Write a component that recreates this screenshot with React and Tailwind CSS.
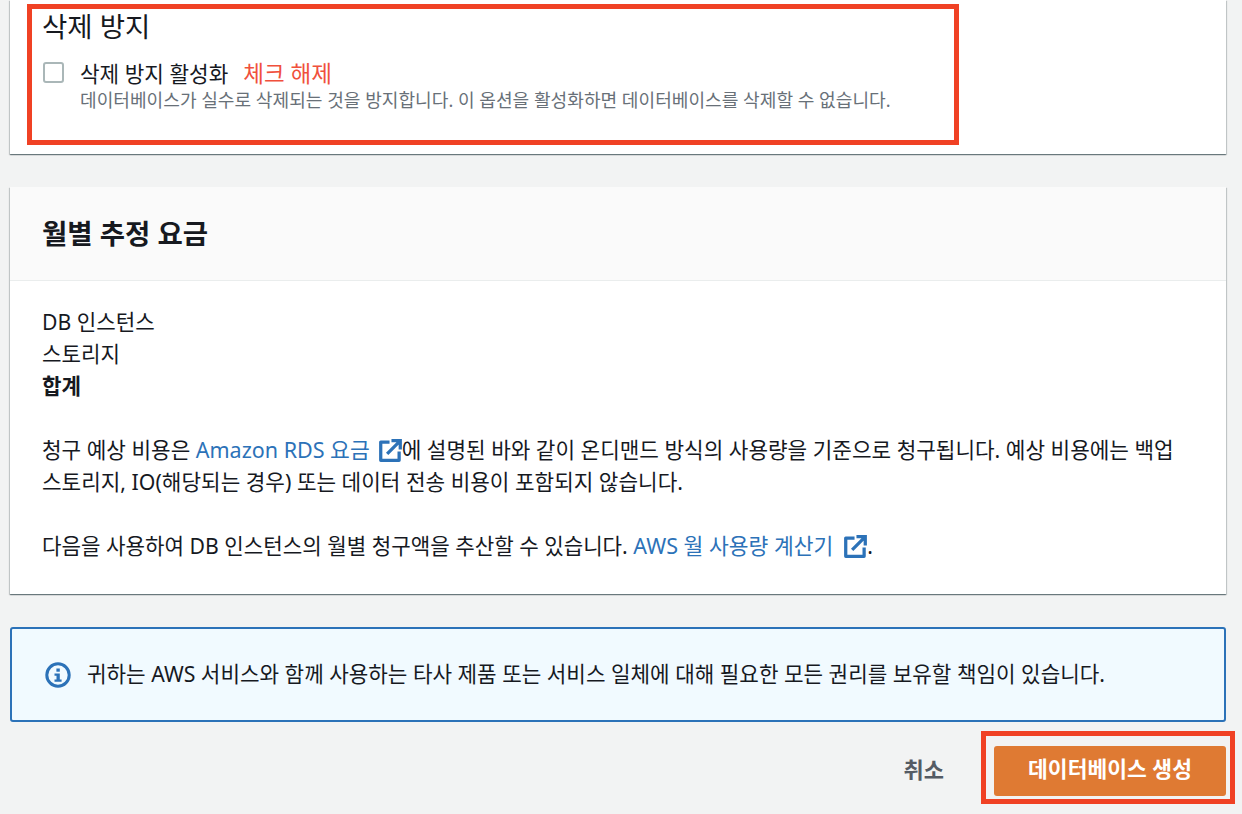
import React from 'react';

const font = { fontFamily: '"Noto Sans", "Noto Sans CJK KR", sans-serif' };

const ExternalIcon = ({ className }) => (
  <svg viewBox="0 0 24 24" className={className} fill="none" stroke="#2c72b8" strokeWidth="3.4">
    <path d="M11 3.2H1.8v19h19.2V13" strokeLinejoin="round" />
    <path d="M8.5 15.5L21 3M13 1.8h9.2V11" />
  </svg>
);

const InfoIcon = () => (
  <svg viewBox="0 0 26 26" className="w-[26px] h-[26px] shrink-0">
    <circle cx="13" cy="13" r="11.2" fill="none" stroke="#2c72b8" strokeWidth="3" />
    <rect x="11.4" y="6.5" width="3.4" height="3.2" fill="#2c72b8" />
    <path d="M9.5 11.5h5.3v6h1.8v2.3H9.5v-2.3h2v-3.7h-2z" fill="#2c72b8" />
  </svg>
);

export default function App() {
  return (
    <div className="relative h-[814px] w-[1242px] overflow-hidden bg-[#f2f3f3] pl-[10px] pr-[16px] text-[#16191f]" style={font}>
      {/* Deletion protection */}
      <div className="h-[154px] bg-white px-[32px] pt-[9px] shadow-[0_1px_1px_0_rgba(0,28,36,0.4),1px_1px_1px_0_rgba(0,28,36,0.15),-1px_1px_1px_0_rgba(0,28,36,0.15)]">
        <h3 className="text-[27.5px] leading-[36px] font-normal">삭제 방지</h3>
        <div className="mt-[15px] flex">
          <div className="mt-[2px] ml-[1px] h-[21px] w-[21px] shrink-0 rounded-[3px] border-2 border-[#aab7b8] bg-white" />
          <div className="ml-[16px] pt-[1px]">
            <div className="flex items-baseline text-[21.3px] leading-[26px]">
              <span>삭제 방지 활성화</span>
              <span className="ml-[15px] text-[22.5px] text-[#f0503c]">체크 해제</span>
            </div>
            <p className="text-[18.1px] leading-[26px] text-[#687078]">
              데이터베이스가 실수로 삭제되는 것을 방지합니다. 이 옵션을 활성화하면 데이터베이스를 삭제할 수 없습니다.
            </p>
          </div>
        </div>
      </div>

      {/* Monthly estimate */}
      <div className="mt-[33px] h-[407px] bg-white shadow-[0_1px_1px_0_rgba(0,28,36,0.4),1px_1px_1px_0_rgba(0,28,36,0.15),-1px_1px_1px_0_rgba(0,28,36,0.15)]">
        <div className="flex h-[94px] items-center border-b border-[#eaeded] bg-[#fafafa] px-[32px]">
          <h2 className="text-[27.5px] font-bold">월별 추정 요금</h2>
        </div>
        <div className="break-keep px-[32px] pt-[25px] text-[21.2px] leading-[32px]">
          <div>DB 인스턴스</div>
          <div>스토리지</div>
          <div className="font-bold">합계</div>
          <p className="mt-[32px] text-[21.3px]">
            청구 예상 비용은 <a className="text-[21.5px] text-[#2c72b8]">Amazon RDS 요금</a>
            <ExternalIcon className="ml-[9px] inline-block h-[23px] w-[23px] align-[-4px]" />에 설명된 바와 같이 온디맨드 방식의 사용량을 기준으로 청구됩니다. 예상 비용에는 백업 스토리지, IO(해당되는 경우) 또는 데이터 전송 비용이 포함되지 않습니다.
          </p>
          <p className="mt-[32px]">
            다음을 사용하여 DB 인스턴스의 월별 청구액을 추산할 수 있습니다. <a className="text-[21.5px] text-[#2c72b8]">AWS 월 사용량 계산기</a>
            <ExternalIcon className="ml-[11px] inline-block h-[23px] w-[23px] align-[-4px]" />.
          </p>
        </div>
      </div>

      {/* Info alert */}
      <div className="mt-[33px] flex h-[95px] items-center rounded-[3px] border-2 border-[#2c72b8] bg-[#f1faff] pl-[33px]">
        <InfoIcon />
        <span className="mb-[2px] ml-[16px] text-[21.25px]">귀하는 AWS 서비스와 함께 사용하는 타사 제품 또는 서비스 일체에 대해 필요한 모든 권리를 보유할 책임이 있습니다.</span>
      </div>

      {/* Actions */}
      <div className="mt-[24px] flex items-center justify-end">
        <button className="mb-[4px] text-[22px] font-bold text-[#545b64]">취소</button>
        <button className="ml-[50px] flex h-[50px] w-[232px] items-center justify-center rounded-[3px] bg-[#df7a33] pb-[3px] text-[21.5px] font-bold text-white">
          데이터베이스 생성
        </button>
      </div>

      {/* Annotation boxes */}
      <div className="absolute left-[27px] top-[4px] h-[141px] w-[932px] border-[5px] border-[#f04124]" />
      <div className="absolute left-[981px] top-[731px] h-[73px] w-[254px] border-[5px] border-[#f04124]" />
    </div>
  );
}
